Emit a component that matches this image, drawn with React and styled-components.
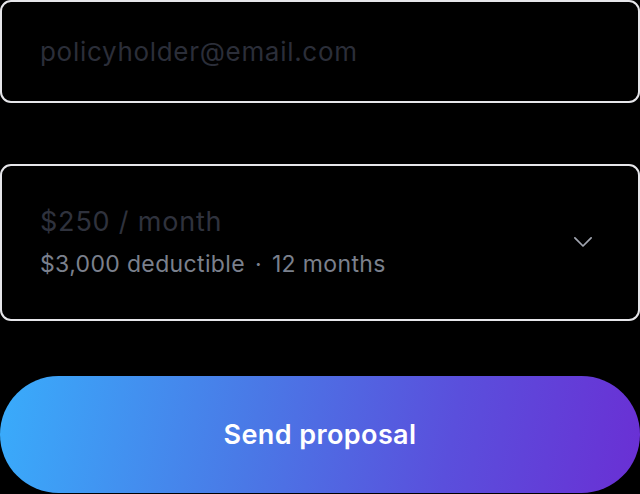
import React from "react";
import styled, { createGlobalStyle } from "styled-components";

const Global = createGlobalStyle`
  html, body { margin: 0; padding: 0; background: #000; }
  body { font-family: Inter, "Noto Sans", sans-serif; }
`;

const Form = styled.form`
  width: 640px;
  display: flex;
  flex-direction: column;
`;

const Field = styled.div`
  box-sizing: border-box;
  height: ${({ $h }) => $h}px;
  margin-bottom: ${({ $gap }) => $gap || 0}px;
  border: 2px solid #e6e6ea;
  border-radius: 11px;
  background: #000;
  display: flex;
  align-items: center;
  padding: 0 40px 0 38px;
`;

const EmailInput = styled.input`
  flex: 1;
  background: transparent;
  border: none;
  outline: none;
  font-family: inherit;
  font-size: 26px;
  letter-spacing: 0.7px;
  color: #e5e7eb;
  padding: 0;
  &::placeholder { color: #2b2e39; }
`;

const SelectBody = styled.div`
  flex: 1;
  display: flex;
  flex-direction: column;
  gap: 12px;
  margin-top: -2px;
`;

const Price = styled.div`
  font-size: 27px;
  letter-spacing: 0.8px;
  color: #2f323d;
`;

const Details = styled.div`
  font-size: 23px;
  letter-spacing: 0.35px;
  color: #7b808d;
  span { margin: 0 10px; }
`;

const Chevron = styled.svg`
  width: 30px;
  height: 30px;
  color: #a1a5b0;
  margin-top: -4px;
`;

const SendButton = styled.button`
  height: 117px;
  border: none;
  border-radius: 60px;
  background: linear-gradient(100deg, #39acfb 0%, #4a78e6 40%, #5a4fdc 70%, #6a2fd4 100%);
  color: #fff;
  font-family: inherit;
  font-size: 27px;
  letter-spacing: 0.4px;
  font-weight: 600;
  cursor: pointer;
`;

export default function App() {
  return (
    <>
      <Global />
      <Form onSubmit={(e) => e.preventDefault()}>
        <Field $h={103} $gap={61}>
          <EmailInput type="email" placeholder="policyholder@email.com" />
        </Field>
        <Field $h={157} $gap={55}>
          <SelectBody>
            <Price>$250 / month</Price>
            <Details>$3,000 deductible<span>·</span>12 months</Details>
          </SelectBody>
          <Chevron viewBox="0 0 24 24" fill="none" stroke="currentColor" strokeWidth="1.4" strokeLinecap="round" strokeLinejoin="round">
            <path d="M5.5 9.5l6.5 6.5 6.5-6.5" />
          </Chevron>
        </Field>
        <SendButton type="submit">Send proposal</SendButton>
      </Form>
    </>
  );
}
